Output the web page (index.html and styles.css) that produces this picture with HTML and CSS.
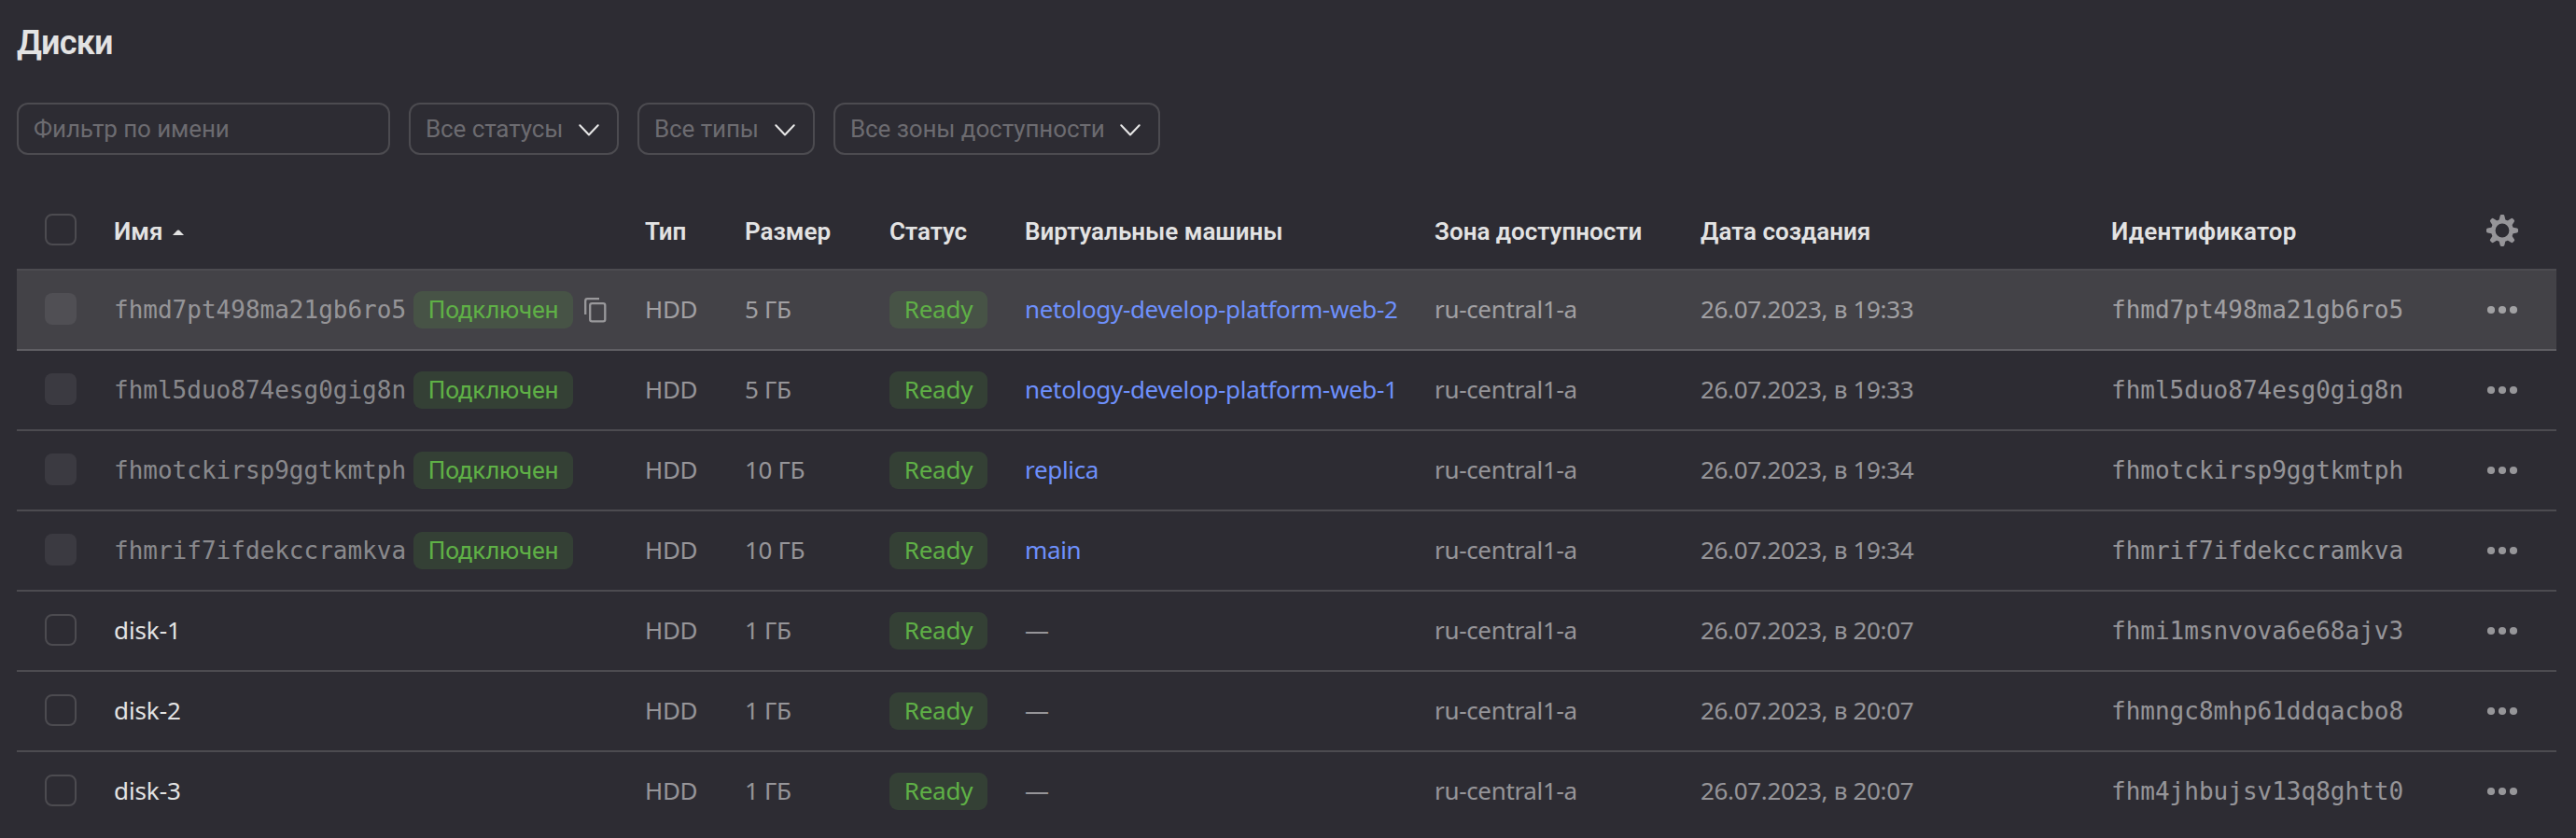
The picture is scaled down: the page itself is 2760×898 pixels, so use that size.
FILE: index.html
```html
<!DOCTYPE html>
<html lang="ru">
<head>
<meta charset="utf-8">
<title>Диски</title>
<link rel="stylesheet" href="styles.css">
</head>
<body>
<svg class="sprite" aria-hidden="true">
  <symbol id="chevron" viewBox="0 0 22 13"><path d="M1.300 1.300 11 11.500 20.700 1.300" fill="none" stroke="currentColor" stroke-width="2" stroke-linecap="round" stroke-linejoin="round"/></symbol>
  <symbol id="dots" viewBox="0 0 34 10"><circle cx="5" cy="5" r="4.100"/><circle cx="17" cy="5" r="4.100"/><circle cx="29" cy="5" r="4.100"/></symbol>
</svg>
<main class="page">
  <h1 class="title">Диски</h1>
  <div class="filters">
    <div class="field field-name">Фильтр по имени</div>
    <div class="field field-status">Все статусы<svg class="chevron"><use href="#chevron"/></svg></div>
    <div class="field field-type">Все типы<svg class="chevron"><use href="#chevron"/></svg></div>
    <div class="field field-zone">Все зоны доступности<svg class="chevron"><use href="#chevron"/></svg></div>
  </div>
  <div class="table">
    <div class="row head">
      <span class="check"></span>
      <span class="name">Имя<svg class="sort" viewBox="0 0 12 6"><path d="M0 6 5 .8Q6 0 7 .8L12 6Z"/></svg></span>
      <span>Тип</span><span>Размер</span><span>Статус</span><span class="head-vm">Виртуальные машины</span><span>Зона доступности</span><span>Дата создания</span><span class="head-id">Идентификатор</span>
      <svg class="gear" viewBox="-17 -17 34 34">
        <circle r="9.700" fill="none" stroke="currentColor" stroke-width="4.600"/>
        <g id="pair"><path d="M-3.600 -10.500 -2.400 -15.600Q-2.200 -17 -1 -17H1Q2.200 -17 2.400 -15.600L3.600 -10.500Z"/><path d="M-3.600 10.500 -2.400 15.600Q-2.200 17 -1 17H1Q2.200 17 2.400 15.600L3.600 10.500Z"/></g>
        <use href="#pair" transform="rotate(45)"/><use href="#pair" transform="rotate(90)"/><use href="#pair" transform="rotate(135)"/>
      </svg>
    </div>
    <div class="row hovered">
      <span class="check off"></span>
      <span class="name mono dim">fhmd7pt498ma21gb6ro5<b class="badge linked">Подключен</b><svg class="copy" viewBox="0 0 24 27"><path d="M1.200 18V3.500Q1.200 1.200 3.500 1.200H16M8.300 6.200H20.200Q22.300 6.200 22.300 8.300V23.300Q22.300 25.400 20.200 25.400H8.300Q6.200 25.400 6.200 23.300V8.300Q6.200 6.200 8.300 6.200Z" fill="none" stroke="currentColor" stroke-width="2.300"/></svg></span>
      <span class="cell">HDD</span><span class="cell">5 ГБ</span><b class="badge">Ready</b><a class="cell link">netology-develop-platform-web-2</a><span class="cell">ru-central1-a</span><span class="cell">26.07.2023, в 19:33</span><span class="mono">fhmd7pt498ma21gb6ro5</span><svg class="dots"><use href="#dots"/></svg>
    </div>
    <div class="row">
      <span class="check off"></span>
      <span class="name mono dim">fhml5duo874esg0gig8n<b class="badge linked">Подключен</b></span>
      <span class="cell">HDD</span><span class="cell">5 ГБ</span><b class="badge">Ready</b><a class="cell link">netology-develop-platform-web-1</a><span class="cell">ru-central1-a</span><span class="cell">26.07.2023, в 19:33</span><span class="mono">fhml5duo874esg0gig8n</span><svg class="dots"><use href="#dots"/></svg>
    </div>
    <div class="row">
      <span class="check off"></span>
      <span class="name mono dim">fhmotckirsp9ggtkmtph<b class="badge linked">Подключен</b></span>
      <span class="cell">HDD</span><span class="cell">10 ГБ</span><b class="badge">Ready</b><a class="cell link">replica</a><span class="cell">ru-central1-a</span><span class="cell">26.07.2023, в 19:34</span><span class="mono">fhmotckirsp9ggtkmtph</span><svg class="dots"><use href="#dots"/></svg>
    </div>
    <div class="row">
      <span class="check off"></span>
      <span class="name mono dim">fhmrif7ifdekccramkva<b class="badge linked">Подключен</b></span>
      <span class="cell">HDD</span><span class="cell">10 ГБ</span><b class="badge">Ready</b><a class="cell link">main</a><span class="cell">ru-central1-a</span><span class="cell">26.07.2023, в 19:34</span><span class="mono">fhmrif7ifdekccramkva</span><svg class="dots"><use href="#dots"/></svg>
    </div>
    <div class="row">
      <span class="check"></span>
      <span class="cell plain">disk-1</span>
      <span class="cell">HDD</span><span class="cell">1 ГБ</span><b class="badge">Ready</b><span class="cell dash">—</span><span class="cell">ru-central1-a</span><span class="cell">26.07.2023, в 20:07</span><span class="mono">fhmi1msnvova6e68ajv3</span><svg class="dots"><use href="#dots"/></svg>
    </div>
    <div class="row">
      <span class="check"></span>
      <span class="cell plain">disk-2</span>
      <span class="cell">HDD</span><span class="cell">1 ГБ</span><b class="badge">Ready</b><span class="cell dash">—</span><span class="cell">ru-central1-a</span><span class="cell">26.07.2023, в 20:07</span><span class="mono">fhmngc8mhp61ddqacbo8</span><svg class="dots"><use href="#dots"/></svg>
    </div>
    <div class="row last">
      <span class="check"></span>
      <span class="cell plain">disk-3</span>
      <span class="cell">HDD</span><span class="cell">1 ГБ</span><b class="badge">Ready</b><span class="cell dash">—</span><span class="cell">ru-central1-a</span><span class="cell">26.07.2023, в 20:07</span><span class="mono">fhm4jhbujsv13q8ghtt0</span><svg class="dots"><use href="#dots"/></svg>
    </div>
  </div>
</main>
</body>
</html>
```
FILE: styles.css
```css
* { box-sizing: border-box; }
body {
  margin: 0;
  height: 898px;
  overflow: hidden;
  background: #2d2c33;
  color: rgba(255, 255, 255, .5);
  font: 400 26px/36px "Noto Sans", sans-serif;
}
svg { display: block; fill: currentColor; flex: none; }
.sprite { display: none; }
.page { padding: 24px 21px 0 18px; }
.title {
  margin: 0;
  height: 86px;
  font: 600 36px/44px Roboto, sans-serif;
  letter-spacing: -.8px;
  color: #e3e3e3;
}
.filters { display: flex; gap: 20px; height: 56px; }
.field {
  display: flex;
  align-items: center;
  justify-content: space-between;
  padding: 0 19px 0 16px;
  border: 2px solid #4c4b50;
  border-radius: 12px;
  font-family: Roboto, sans-serif;
  letter-spacing: -.1px;
  color: #6c6b70;
  white-space: nowrap;
}
.field-name { width: 400px; }
.field-status { width: 225px; }
.field-type { width: 190px; }
.field-zone { width: 350px; }
.chevron { width: 22px; height: 13px; margin-top: 2px; color: #e8e8e8; }
.table { margin-top: 38px; }
.row {
  display: grid;
  grid-template-columns: 30px 74px 569px 107px 155px 145px 439px 285px 440px 402px 1fr;
  align-items: center;
  height: 86px;
  border-bottom: 2px solid #4c4b50;
  white-space: nowrap;
}
.row > :first-child { grid-column: 2; }
.row.last { border-bottom-color: transparent; }
.row.hovered { background: #434247; border-bottom-color: #5f5e63; }
.head { font-family: Roboto, sans-serif; font-weight: 600; color: #e3e3e3; }
.head > span:not(.check) { padding-top: 3px; }
.head > .head-vm { padding-top: 1px; }
.head-id { letter-spacing: .25px; }
.check {
  width: 34px;
  height: 34px;
  margin-bottom: 2px;
  border: 2px solid #4c4b50;
  border-radius: 8px;
}
.head .check { margin-bottom: 0; }
.check.off { border: 0; background: rgba(255, 255, 255, .07); }
.name { display: flex; align-items: center; }
.sort { width: 12px; height: 6px; margin: 2px 0 0 11px; }
.cell { padding-bottom: 2px; letter-spacing: -.33px; }
.mono { font-family: "DejaVu Sans Mono", monospace; }
.dim { color: rgba(255, 255, 255, .46); }
.plain { color: #e3e3e3; letter-spacing: -.1px; }
.badge {
  display: flex;
  align-items: center;
  justify-content: center;
  width: 105px;
  height: 40px;
  padding-bottom: 2px;
  border-radius: 9px;
  background: rgba(91, 181, 67, .15);
  color: #5fb046;
  font-family: "Noto Sans", sans-serif;
  font-weight: 400;
  letter-spacing: -.27px;
}
.linked { width: 171px; margin-left: 8px; padding-bottom: 0; font-family: Roboto, sans-serif; letter-spacing: -.2px; }
.link { color: #6e90fc; }
.copy { width: 24px; height: 27px; margin-left: 12px; }
.gear { width: 34px; height: 34px; margin-top: 2px; color: #969599; }
.dots { width: 34px; height: 10px; }
```
